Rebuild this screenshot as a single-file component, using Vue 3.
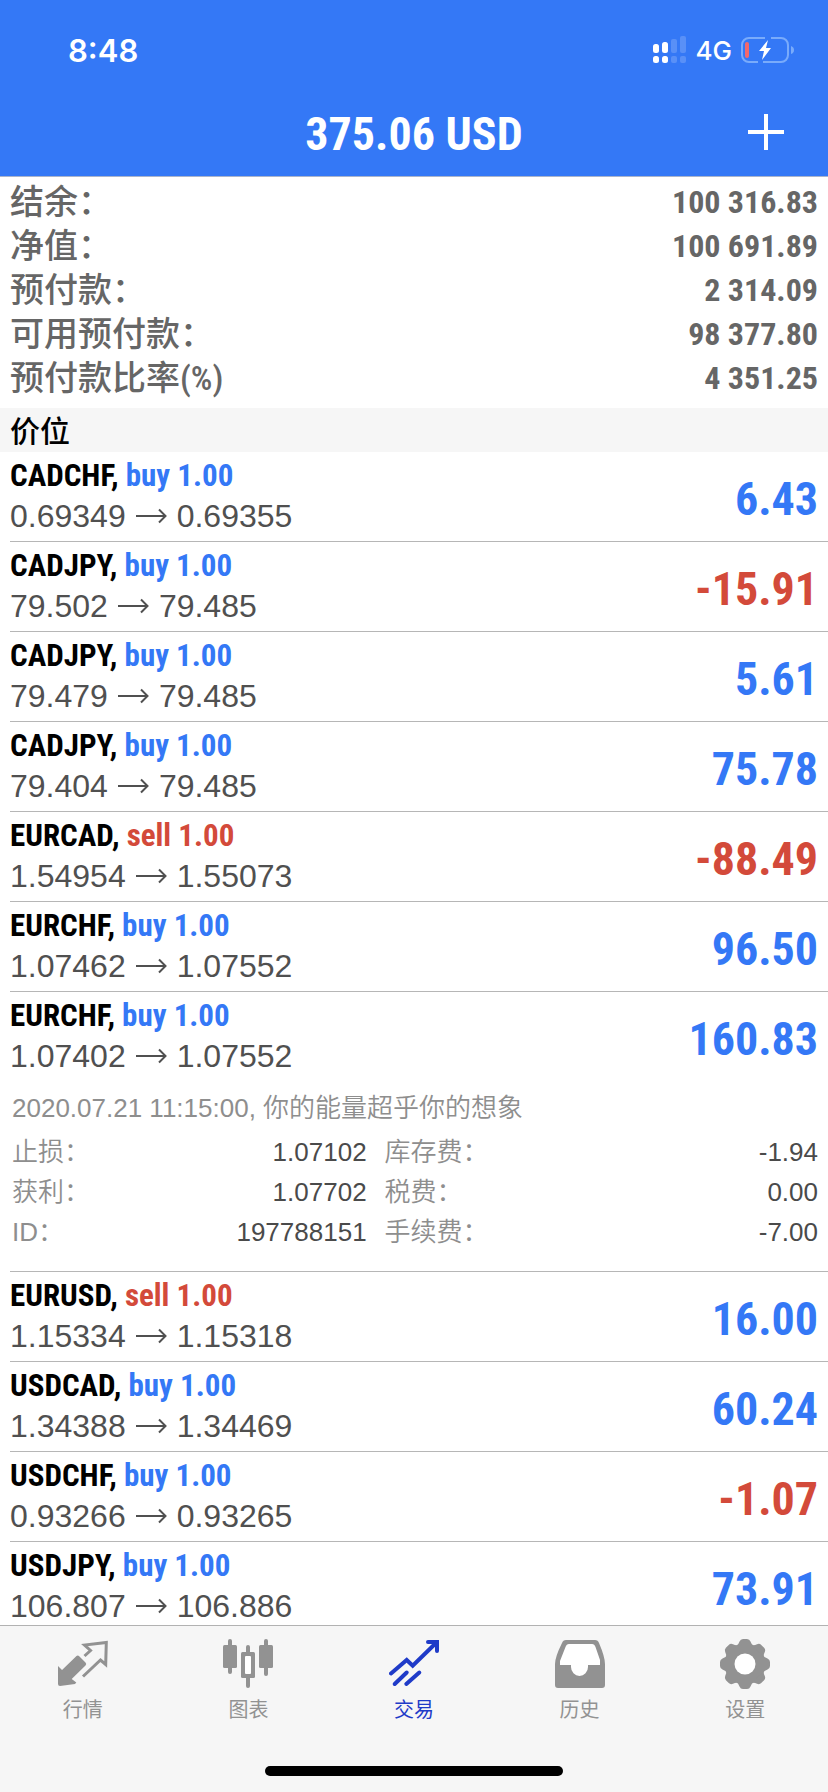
<script setup>
const account = [
  { label: '结余：', value: '100 316.83' },
  { label: '净值：', value: '100 691.89' },
  { label: '预付款：', value: '2 314.09' },
  { label: '可用预付款：', value: '98 377.80' },
  { label: '预付款比率(%)', value: '4 351.25' },
]

const positions = [
  { symbol: 'CADCHF', side: 'buy', volume: '1.00', open: '0.69349', current: '0.69355', profit: '6.43' },
  { symbol: 'CADJPY', side: 'buy', volume: '1.00', open: '79.502', current: '79.485', profit: '-15.91' },
  { symbol: 'CADJPY', side: 'buy', volume: '1.00', open: '79.479', current: '79.485', profit: '5.61' },
  { symbol: 'CADJPY', side: 'buy', volume: '1.00', open: '79.404', current: '79.485', profit: '75.78' },
  { symbol: 'EURCAD', side: 'sell', volume: '1.00', open: '1.54954', current: '1.55073', profit: '-88.49' },
  { symbol: 'EURCHF', side: 'buy', volume: '1.00', open: '1.07462', current: '1.07552', profit: '96.50' },
  {
    symbol: 'EURCHF', side: 'buy', volume: '1.00', open: '1.07402', current: '1.07552', profit: '160.83',
    note: '2020.07.21 11:15:00, 你的能量超乎你的想象',
    details: [
      { label: '止损：', value: '1.07102' },
      { label: '库存费：', value: '-1.94' },
      { label: '获利：', value: '1.07702' },
      { label: '税费：', value: '0.00' },
      { label: 'ID：', value: '197788151' },
      { label: '手续费：', value: '-7.00' },
    ],
  },
  { symbol: 'EURUSD', side: 'sell', volume: '1.00', open: '1.15334', current: '1.15318', profit: '16.00' },
  { symbol: 'USDCAD', side: 'buy', volume: '1.00', open: '1.34388', current: '1.34469', profit: '60.24' },
  { symbol: 'USDCHF', side: 'buy', volume: '1.00', open: '0.93266', current: '0.93265', profit: '-1.07' },
  { symbol: 'USDJPY', side: 'buy', volume: '1.00', open: '106.807', current: '106.886', profit: '73.91' },
]

const teeth = [0, 45, 90, 135, 180, 225, 270, 315]
</script>

<template>
  <div class="screen">
    <header class="top">
      <div class="status">
        <span class="clock">8:48</span>
        <div class="indicators">
          <svg class="signal" width="34" height="28" viewBox="0 0 34 28" fill="#fff" aria-hidden="true">
            <rect x="0" y="8" width="6" height="9" rx="2.5" />
            <rect x="0" y="20" width="6" height="7" rx="2.5" />
            <rect x="9" y="6" width="6" height="11" rx="2.5" />
            <rect x="9" y="20" width="6" height="7" rx="2.5" />
            <g opacity="0.18">
              <rect x="18" y="3" width="6" height="14" rx="2" />
              <rect x="18" y="20" width="6" height="7" rx="2" />
              <rect x="27" y="0" width="6" height="17" rx="2" />
              <rect x="27" y="20" width="6" height="7" rx="2" />
            </g>
          </svg>
          <span class="network">4G</span>
          <svg class="battery" width="54" height="26" viewBox="0 0 54 26" aria-hidden="true">
            <g fill="none" stroke="#79abfb" stroke-width="2">
              <path d="M24 1H8A7 7 0 0 0 1 8V18A7 7 0 0 0 8 25H17" />
              <path d="M30 1H40A7 7 0 0 1 47 8V18A7 7 0 0 1 40 25H22" />
            </g>
            <path d="M50 9Q53 10 53 13T50 17Z" fill="#79abfb" />
            <rect x="4" y="5" width="4" height="16" rx="2" fill="#f2686c" />
            <path d="M27 3L18 14H23L21 23L30 11H25Z" fill="#fff" />
          </svg>
        </div>
      </div>
      <div class="titlebar">
        <h1>375.06 USD</h1>
        <button class="add" type="button" aria-label="新订单">
          <svg width="36" height="36" viewBox="0 0 36 36" aria-hidden="true">
            <path d="M18 0V36M0 18H36" stroke="#fff" stroke-width="4" />
          </svg>
        </button>
      </div>
    </header>

    <main class="content">
      <dl class="account">
        <div v-for="item in account" :key="item.label" class="account-row">
          <dt>{{ item.label }}</dt>
          <dd>{{ item.value }}</dd>
        </div>
      </dl>

      <h2 class="section">价位</h2>

      <ul class="positions">
        <li v-for="(p, i) in positions" :key="i" class="position">
          <div class="summary">
            <div class="order">
              <p class="name">{{ p.symbol }}, <span :class="p.side">{{ p.side }} {{ p.volume }}</span></p>
              <p class="prices">
                <span>{{ p.open }}</span>
                <svg width="31" height="16" viewBox="0 0 31 16" fill="none" stroke="#505050" stroke-width="2" aria-hidden="true">
                  <path d="M0 8H29M23 1.5L29.5 8L23 14.5" />
                </svg>
                <span>{{ p.current }}</span>
              </p>
            </div>
            <strong class="profit" :class="p.profit.startsWith('-') ? 'sell' : 'buy'">{{ p.profit }}</strong>
          </div>
          <div v-if="p.details" class="extra">
            <p class="note">{{ p.note }}</p>
            <dl class="details">
              <div v-for="d in p.details" :key="d.label" class="detail">
                <dt>{{ d.label }}</dt>
                <dd>{{ d.value }}</dd>
              </div>
            </dl>
          </div>
        </li>
      </ul>
    </main>

    <footer class="bottom">
      <nav class="tabs">
        <a class="tab" href="#quotes">
          <svg width="50" height="50" viewBox="0 0 50 50" aria-hidden="true">
            <path d="M0 45V27L4 31L18.500 17Q20 16 21.500 17.500L27.500 23.500Q29 25 27.500 26.500L13.700 40L18.300 43.500L17 45L2 47Q0 47 0 45Z" fill="#929292" />
            <path d="M26.500 17L32.500 11.500L26.500 6L48.300 3.500L47.700 25.500L42.500 21L25 37.500" fill="none" stroke="#929292" stroke-width="3" />
          </svg>
          <span>行情</span>
        </a>
        <a class="tab" href="#chart">
          <svg width="50" height="50" viewBox="0 0 50 50" fill="#929292" aria-hidden="true">
            <rect x="5" y="0" width="4" height="35" rx="2" />
            <rect x="0" y="6" width="14" height="23" rx="1.5" />
            <rect x="23" y="6" width="4" height="43" rx="2" />
            <rect x="18" y="13" width="14" height="26" rx="1.5" />
            <rect x="22" y="17" width="6" height="18" rx="1" fill="#fff" />
            <rect x="41" y="0" width="4" height="37" rx="2" />
            <rect x="36" y="6" width="14" height="23" rx="1.5" />
          </svg>
          <span>图表</span>
        </a>
        <a class="tab active" href="#trade" aria-current="page">
          <svg width="50" height="50" viewBox="0 0 50 50" fill="none" stroke="#1f3bc8" stroke-width="4" stroke-linecap="round" aria-hidden="true">
            <path d="M2 34.500L17.700 21L23.700 26.700L48 3" />
            <path d="M39 3H48V12" />
            <path d="M5.700 45L17.700 33.500M17.300 45L30.300 33.500" />
          </svg>
          <span>交易</span>
        </a>
        <a class="tab" href="#history">
          <svg width="50" height="50" viewBox="0 0 50 50" aria-hidden="true">
            <path d="M11 1H40Q43 1 44 4Q50 18 50 25V46Q50 49 47 49H3Q0 49 0 46V25Q0 18 7 4Q8 1 11 1Z" fill="#929292" />
            <path d="M14 5H37Q39.500 5 40.500 8L45 21V26H33V28A8.500 9 0 0 1 16 28V26H5V22L10.500 8Q11.500 5 14 5Z" fill="#fff" />
          </svg>
          <span>历史</span>
        </a>
        <a class="tab" href="#settings">
          <svg width="50" height="50" viewBox="0 0 50 50" fill="#929292" aria-hidden="true">
            <circle cx="25" cy="25" r="20" />
            <path
              v-for="angle in teeth"
              :key="angle"
              d="M16 7Q18.500 6 19.500 2.500Q20.500 0 23 0H27Q29.500 0 30.500 2.500Q31.500 6 34 7Z"
              :transform="`rotate(${angle} 25 25)`"
            />
            <circle cx="25" cy="25" r="10.5" fill="#fff" />
          </svg>
          <span>设置</span>
        </a>
      </nav>
      <div class="home-indicator"></div>
    </footer>
  </div>
</template>

<style>
body {
  margin: 0;
  background: #fff;
}
</style>

<style scoped>
.screen {
  --sans: "Liberation Sans", "Noto Sans CJK SC", sans-serif;
  --narrow: "Liberation Sans Narrow", "Roboto Condensed", "Liberation Sans", "Noto Sans CJK SC", sans-serif;
  display: flex;
  flex-direction: column;
  height: 100vh;
  font-family: var(--sans);
  color: #505050;
}

h1, h2, p, dl, dd, ul {
  margin: 0;
  padding: 0;
}

.top {
  flex: none;
  background: #3478f6;
  color: #fff;
  border-bottom: 1px solid #a9b4cc;
}

.status {
  display: flex;
  justify-content: space-between;
  align-items: center;
  height: 88px;
  padding: 12px 33px 0 68px;
  box-sizing: border-box;
  font-family: Inter, sans-serif;
}

.clock {
  font-size: 31px;
  font-weight: 600;
}

.indicators {
  display: flex;
  align-items: center;
  gap: 9px;
}

.network {
  font-size: 26px;
  font-weight: 500;
}

.titlebar {
  display: grid;
  grid-template-columns: 1fr auto 1fr;
  align-items: center;
  height: 88px;
  padding: 0 44px;
}

h1 {
  grid-column: 2;
  padding-top: 4px;
  font-family: var(--narrow);
  font-size: 46px;
  line-height: 56px;
  font-weight: 700;
}

.add {
  justify-self: end;
  display: flex;
  padding: 0;
  border: 0;
  background: none;
}

.content {
  flex: 1;
  min-height: 0;
  overflow-y: auto;
  scrollbar-width: none;
}

.account {
  padding: 3px 10px 8px;
  color: #666;
}

.account-row {
  display: flex;
  justify-content: space-between;
  height: 44px;
  line-height: 44px;
}

.account-row dt {
  font-family: var(--narrow);
  font-size: 34px;
  font-weight: 500;
}

.account-row dd {
  font-family: var(--narrow);
  font-size: 32px;
  font-weight: 700;
}

.section {
  padding: 0 10px 2px;
  background: #f6f6f6;
  color: #000;
  font-family: "Noto Sans CJK SC", sans-serif;
  font-size: 30px;
  font-weight: 500;
  line-height: 42px;
}

.positions {
  list-style: none;
}

.position {
  margin-left: 10px;
  border-bottom: 1px solid #b6b6b6;
}

.summary {
  display: flex;
  justify-content: space-between;
  align-items: center;
  height: 89px;
  padding-right: 10px;
}

.order {
  padding-bottom: 2px;
}

.name {
  font-family: var(--narrow);
  font-size: 31px;
  line-height: 41px;
  font-weight: 700;
  color: #000;
}

.prices {
  display: flex;
  align-items: center;
  gap: 10px;
  font-size: 32px;
  line-height: 41px;
}

.profit {
  padding-top: 4px;
  font-family: var(--narrow);
  font-size: 46px;
  line-height: 56px;
}

.buy {
  color: #3478f6;
}

.sell {
  color: #d34a3a;
}

.extra {
  padding: 7px 10px 19px 2px;
  font-size: 26px;
  line-height: 40px;
}

.note,
.detail dt {
  color: #8e8e8e;
  font-weight: 350;
}

.details {
  display: grid;
  grid-template-columns: 9fr 11fr;
  column-gap: 18px;
  padding-top: 4px;
}

.detail {
  display: flex;
  justify-content: space-between;
  height: 40px;
}

.detail dd {
  color: #4a4a4a;
}

.bottom {
  flex: none;
  background: #f6f6f6;
  border-top: 1px solid #b2b2b2;
}

.tabs {
  display: grid;
  grid-template-columns: repeat(5, 1fr);
  height: 140px;
}

.tab {
  display: flex;
  flex-direction: column;
  align-items: center;
  gap: 6px;
  padding-top: 13px;
  color: #929292;
  font-family: "Noto Sans CJK SC", sans-serif;
  font-size: 20px;
  line-height: 28px;
  text-decoration: none;
}

.active {
  color: #1f3bc8;
}

.home-indicator {
  width: 36%;
  height: 10px;
  margin: 0 auto 16px;
  border-radius: 5px;
  background: #000;
}
</style>
